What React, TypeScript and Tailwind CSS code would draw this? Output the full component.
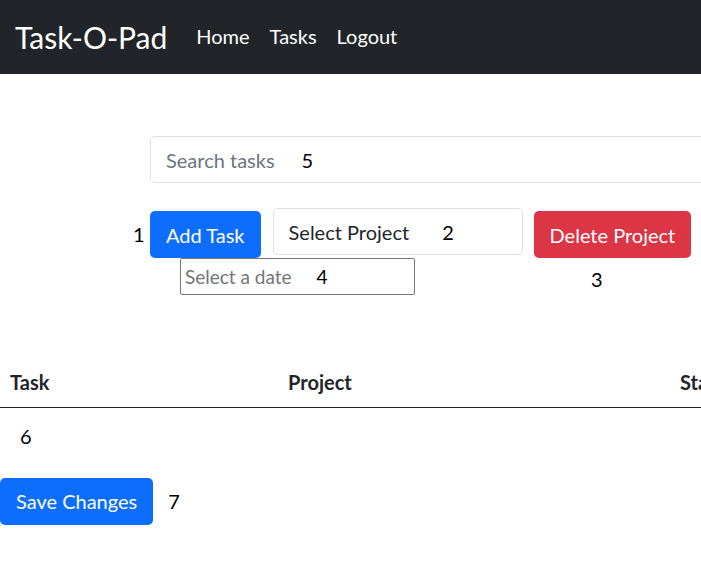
import React from 'react';

const font = { fontFamily: 'Lato, "Liberation Sans", sans-serif' };

export default function App() {
  return (
    <div className="w-[701px] h-[566px] overflow-hidden bg-white text-[20px] text-[#212529]" style={font}>
      {/* navbar */}
      <nav className="h-[74px] bg-[#212529] flex items-center px-[15px] text-white">
        <span className="text-[30px] leading-none mr-[29px] -mt-[1px]">Task-O-Pad</span>
        <div className="flex items-center gap-[20px] text-[20px] leading-none -mt-[3px]">
          <span>Home</span>
          <span>Tasks</span>
          <span>Logout</span>
        </div>
      </nav>

      {/* search */}
      <div className="mt-[62px] ml-[150px] w-[620px] h-[47px] border border-[#dee2e6] rounded-[5px] flex items-center pl-[15px] text-[20px] leading-none">
        <span className="text-[#6c757d]">Search tasks</span>
        <span className="ml-[27px] text-black">5</span>
      </div>

      {/* project row */}
      <div className="mt-[25px] ml-[133px] flex items-start leading-none">
        <span className="mt-[16px] w-[17px] text-black">1</span>
        <button className="mt-[3px] h-[47px] px-[16px] rounded-[5px] bg-[#0d6efd] text-white">Add Task</button>
        <div className="ml-[12px] w-[250px] h-[47px] border border-[#dee2e6] rounded-[5px] flex items-center pl-[15px]">
          <span>Select Project</span>
          <span className="ml-[33px] text-black">2</span>
        </div>
        <button className="ml-[11px] mt-[3px] h-[47px] px-[16px] rounded-[5px] bg-[#dc3545] text-white">Delete Project</button>
      </div>

      {/* date row */}
      <div className="ml-[180px] flex items-center leading-none">
        <div className="w-[235px] h-[37px] border border-[#767676] rounded-[2px] flex items-center pl-[4px] text-[19px]">
          <span className="text-[#757575]">Select a date</span>
          <span className="ml-[25px] text-black">4</span>
        </div>
        <span className="ml-[176px] mt-[4px] text-black">3</span>
      </div>

      {/* table */}
      <table className="mt-[62px] w-[900px] border-collapse text-left">
        <thead>
          <tr className="border-b border-[#212529]">
            <th className="w-[278px] h-[50px] px-[10px] font-bold">Task</th>
            <th className="w-[392px] h-[50px] px-[10px] font-bold">Project</th>
            <th className="h-[50px] px-[10px] font-bold">Status</th>
          </tr>
        </thead>
      </table>
      <div className="ml-[20px] mt-[18px] leading-none text-black">6</div>

      <div className="mt-[32px] flex items-center leading-none">
        <button className="h-[47px] px-[16px] rounded-[5px] bg-[#0d6efd] text-white">Save Changes</button>
        <span className="ml-[15px] text-black">7</span>
      </div>
    </div>
  );
}
